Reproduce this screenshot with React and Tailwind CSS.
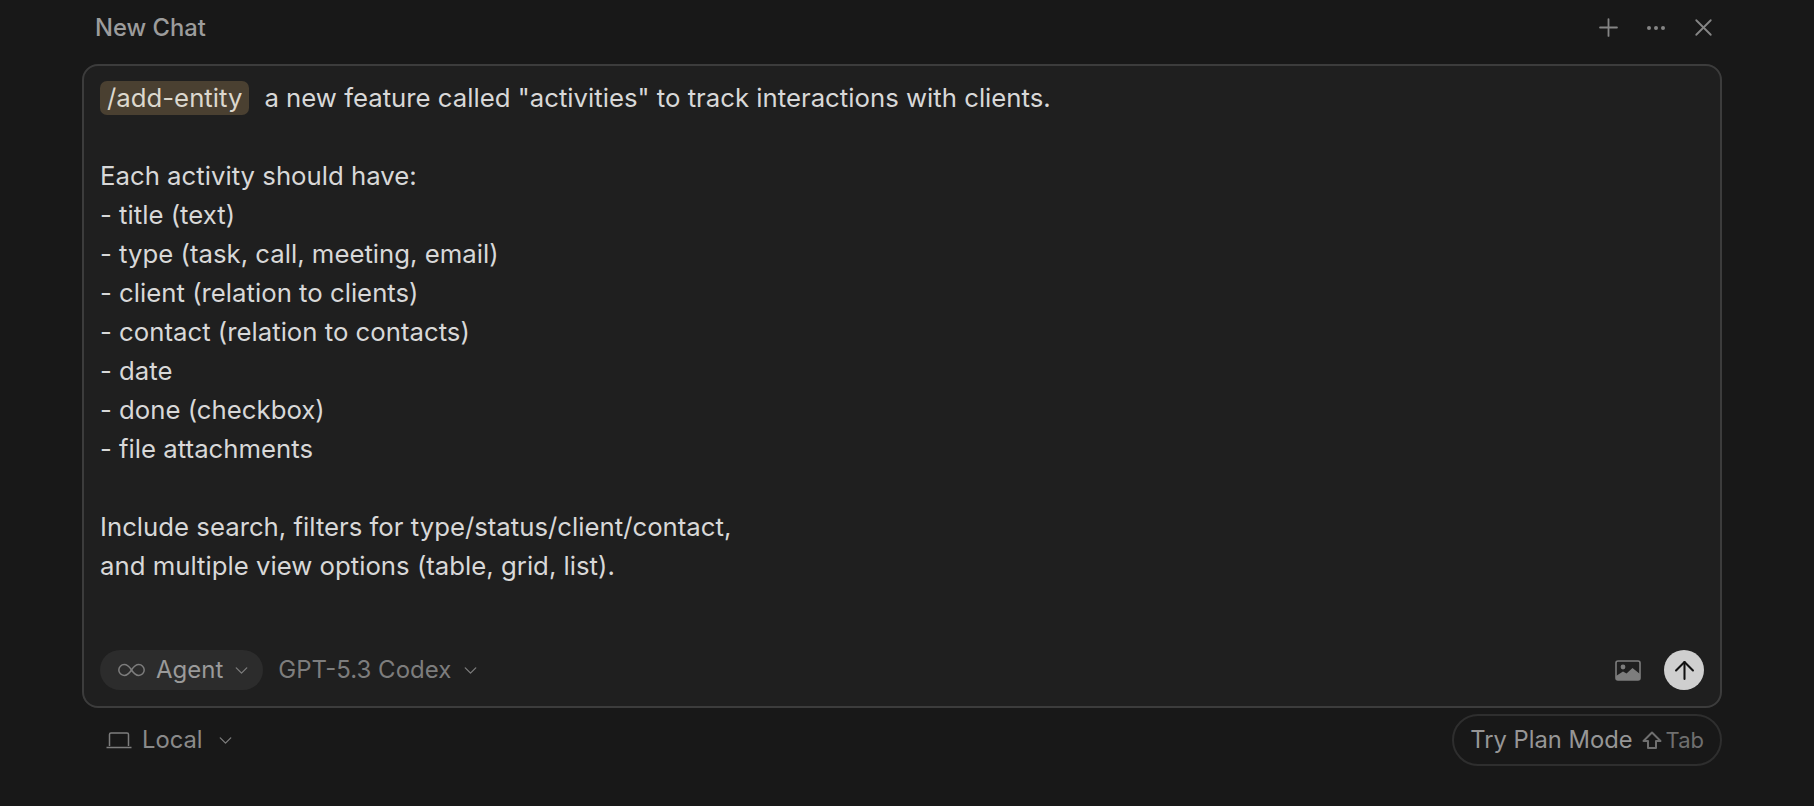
import React from "react";
import { ChevronDown, Plus, Ellipsis, X, ArrowUp } from "lucide-react";

const lines = [
  "",
  "Each activity should have:",
  "- title (text)",
  "- type (task, call, meeting, email)",
  "- client (relation to clients)",
  "- contact (relation to contacts)",
  "- date",
  "- done (checkbox)",
  "- file attachments",
  "",
  "Include search, filters for type/status/client/contact,",
  "and multiple view options (table, grid, list).",
];

const InfinityIcon = () => (
  <svg width="29" height="14" viewBox="0 0 29 14" fill="none" stroke="#7d7d7d" strokeWidth="1.5">
    <path d="M14.5 7C12 3.2 10 1.6 7.2 1.6A5.4 5.4 0 0 0 7.2 12.4C10 12.4 12 10.8 14.5 7C17 3.2 19 1.6 21.8 1.6A5.4 5.4 0 0 1 21.8 12.4C19 12.4 17 10.8 14.5 7Z" />
  </svg>
);

const ImageIcon = () => (
  <svg width="26" height="21" viewBox="0 0 26 21" fill="none">
    <rect x="1" y="1" width="24" height="19" rx="2" stroke="#7d7d7d" strokeWidth="1.6" />
    <circle cx="8" cy="7" r="2.4" fill="#7d7d7d" />
    <path d="M1 19V16L8 11.5L11.5 13.5L17.5 8L25 14V19Q25 20 24 20H2Q1 20 1 19Z" fill="#7d7d7d" />
  </svg>
);

const ShiftIcon = () => (
  <svg width="20" height="19" viewBox="0 0 20 19" fill="none" stroke="#6f6f6f" strokeWidth="2" strokeLinejoin="round">
    <path d="M10 1.5L18.5 10H14V17H6V10H1.5Z" />
  </svg>
);

const LaptopIcon = () => (
  <svg width="26" height="17" viewBox="0 0 26 17" fill="none" stroke="#7d7d7d" strokeWidth="1.5">
    <path d="M3.5 14V2.5Q3.5 1 5 1H21Q22.5 1 22.5 2.5V14" />
    <path d="M0.5 15.5H25.5" />
  </svg>
);

export default function App() {
  return (
    <div className="h-[806px] w-[1814px] overflow-hidden bg-[#181818] pl-[82px] pr-[92px] font-['Inter',sans-serif]">
      {/* header */}
      <div className="flex h-[64px] items-center justify-between pb-[9px] pl-[13px] pr-[4px]">
        <span className="text-[23.75px] font-medium text-[#9c9c9c]">New Chat</span>
        <div className="flex items-center gap-[21px] text-[#858585]">
          <Plus size={29} strokeWidth={1.5} />
          <Ellipsis size={24} strokeWidth={2} />
          <X size={29} strokeWidth={1.5} />
        </div>
      </div>

      {/* input box */}
      <div className="flex h-[644px] flex-col justify-between rounded-[16px] border-2 border-[#3c3c3c] bg-[#1f1f1f] pb-[16px] pl-[16px] pr-[16px] pt-[12px]">
        <div className="text-[25.75px] leading-[39px] text-[#d8d8d8]">
          <div className="flex items-center">
            <span className="rounded-[7px] bg-[#4a4031] px-[7px] leading-[34px] text-[#dcd8ce]">/add-entity</span>
            <span className="ml-[15px]">a new feature called "activities" to track interactions with clients.</span>
          </div>
          {lines.map((line, i) => (
            <div key={i} className="h-[39px]">{line}</div>
          ))}
        </div>

        <div className="flex items-center justify-between">
          <div className="flex items-center gap-[15px] text-[24px]">
            <div className="flex h-[40px] items-center rounded-full bg-[#2c2c2c] pl-[17px] pr-[11px] text-[#9a9a9a]">
              <InfinityIcon />
              <span className="ml-[10px]">Agent</span>
              <ChevronDown size={21} strokeWidth={1.5} className="ml-[8px] text-[#7d7d7d]" />
            </div>
            <div className="flex items-center text-[#7d7d7d]">
              <span>GPT-5.3 Codex</span>
              <ChevronDown size={21} strokeWidth={1.5} className="ml-[9px]" />
            </div>
          </div>
          <div className="flex items-center gap-[23px]">
            <ImageIcon />
            <div className="flex h-[40px] w-[40px] items-center justify-center rounded-full bg-[#cfcfcf] text-[#111111]">
              <ArrowUp size={29} strokeWidth={1.7} />
            </div>
          </div>
        </div>
      </div>

      {/* footer */}
      <div className="mt-[6px] flex items-center justify-between">
        <div className="flex items-center pl-[24px] text-[23.75px] text-[#8a8a8a]">
          <LaptopIcon />
          <span className="ml-[10px]">Local</span>
          <ChevronDown size={21} strokeWidth={1.5} className="ml-[12px] text-[#7d7d7d]" />
        </div>
        <div className="flex h-[52px] items-center rounded-full border-2 border-[#2e2e2e] pl-[16px] pr-[16px]">
          <span className="text-[23.75px] text-[#969696]">Try Plan Mode</span>
          <span className="ml-[9px]"><ShiftIcon /></span>
          <span className="ml-[4px] text-[22px] text-[#6f6f6f]">Tab</span>
        </div>
      </div>
    </div>
  );
}
